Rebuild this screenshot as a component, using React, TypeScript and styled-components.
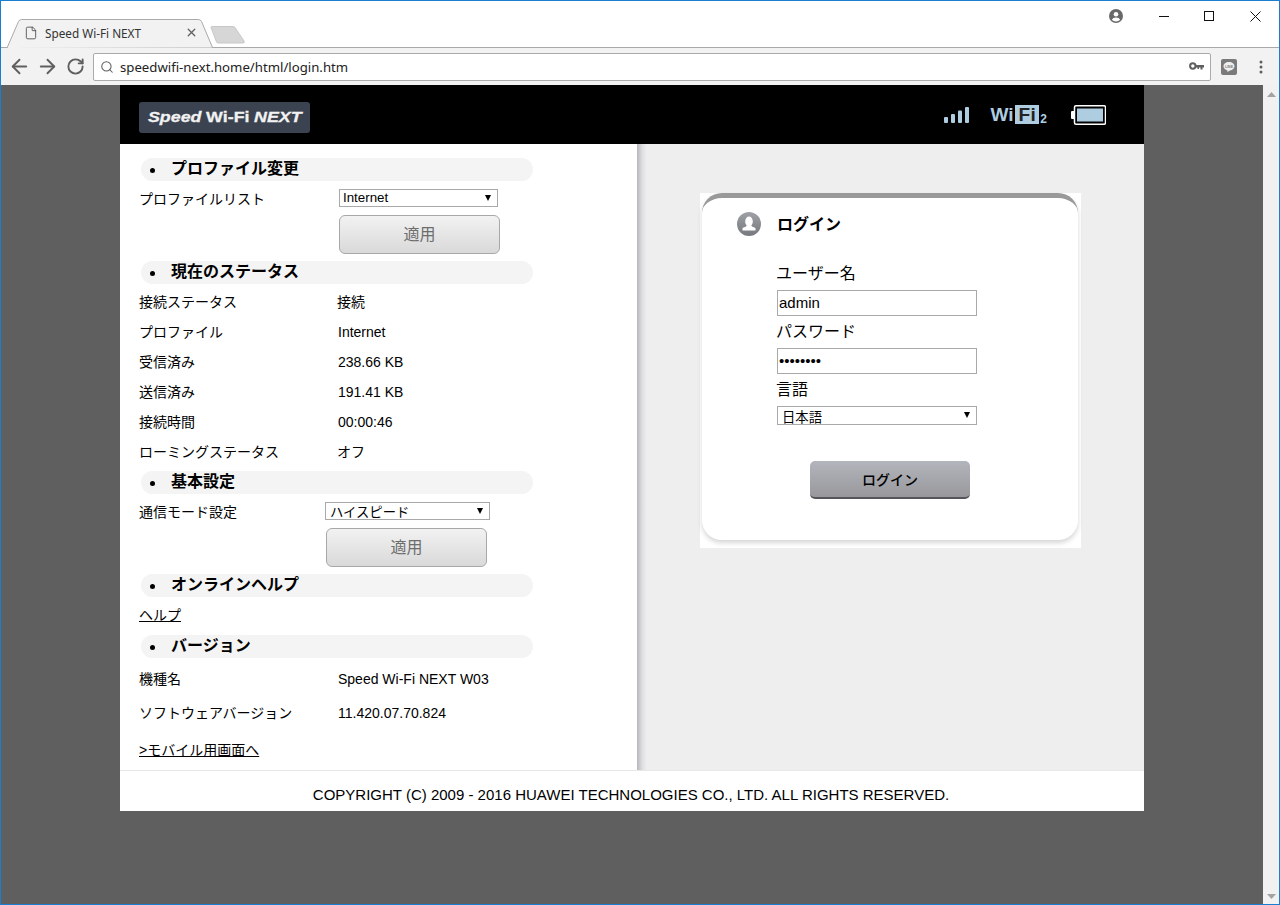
import React from "react";
import styled, { createGlobalStyle } from "styled-components";
import { ArrowLeft, ArrowRight, RotateCw, Search, File, X } from "lucide-react";

const Global = createGlobalStyle`
  html, body { margin: 0; padding: 0; height: 100%; overflow: hidden; }
  #root { height: 100%; }
  * { box-sizing: border-box; }
`;

const PAGE_FONT = `"Liberation Sans", "Noto Sans CJK JP", sans-serif`;
const UI_FONT = `"Noto Sans", "Open Sans", sans-serif`;

const Frame = styled.div`
  width: 1280px;
  height: 905px;
  display: flex;
  flex-direction: column;
  border: 1px solid #1a7ed2;
  background: #fff;
  font-family: ${PAGE_FONT};
  color: #000;
`;

const TabStrip = styled.div`
  height: 47px;
  flex: none;
  display: flex;
  align-items: flex-end;
  padding-left: 5px;
  position: relative;
  background: #fff;
  border-bottom: 1px solid #a9a9a9;
`;

const Tab = styled.div`
  position: relative;
  width: 207px;
  height: 29px;
  margin-bottom: -1px;
  display: flex;
  align-items: center;
  padding: 0 15px 2px 18px;
  gap: 7px;
  color: #444;
`;

const TabShape = styled.svg`
  position: absolute;
  left: 0;
  top: 0;
`;

const TabTitle = styled.span`
  position: relative;
  flex: 1;
  font: 11.75px ${UI_FONT};
  color: #333;
  white-space: nowrap;
`;

const NewTab = styled.svg`
  margin: 0 0 3px -3px;
`;

const WindowControls = styled.div`
  position: absolute;
  right: 0;
  top: 0;
  height: 30px;
  display: flex;
  align-items: center;
`;

const Control = styled.div<{ $w: number }>`
  width: ${(p) => p.$w}px;
  height: 30px;
  display: flex;
  align-items: center;
  justify-content: center;
`;

const Toolbar = styled.div`
  height: 37px;
  flex: none;
  display: flex;
  align-items: center;
  background: #f2f2f2;
  padding: 0 0 0 4px;
`;

const NavButton = styled.div`
  width: 28px;
  display: flex;
  justify-content: center;
  color: #5f5f5f;
`;

const Omnibox = styled.div`
  width: 1118px;
  height: 28px;
  margin-left: 4px;
  padding: 0 6px 0 6px;
  display: flex;
  align-items: center;
  gap: 6px;
  background: #fff;
  border: 1px solid #ababab;
  border-radius: 2px;
  color: #5f5f5f;
`;

const Url = styled.span`
  flex: 1;
  font: 13.2px ${UI_FONT};
  color: #222;
`;

const ExtSlot = styled.div`
  width: 36px;
  height: 16px;
  display: flex;
  align-items: center;
  justify-content: center;
`;

const MenuSlot = styled.div`
  width: 20px;
  margin-left: 4px;
  display: flex;
  justify-content: center;
`;

const Viewport = styled.div`
  flex: 1;
  display: flex;
  min-height: 0;
`;

const Stage = styled.div`
  flex: 1;
  background: #5f5f5f;
  padding-left: 119px;
`;

const Scrollbar = styled.div`
  width: 16px;
  background: #f1f1f1;
  display: flex;
  flex-direction: column;
  justify-content: space-between;
  align-items: center;
  padding: 7px 0 5px;
`;

const Page = styled.div`
  width: 1024px;
`;

const Header = styled.header`
  height: 59px;
  background: #000;
  display: flex;
  align-items: center;
  padding: 0 38px 0 19px;
`;

const Logo = styled.div`
  width: 171px;
  height: 31px;
  margin-top: 5px;
  border-radius: 3px;
  background: #3b4350;
  display: flex;
  align-items: center;
  justify-content: center;
`;

const LogoText = styled.div`
  color: #f2f2f2;
  font: bold 15.5px "Liberation Sans", sans-serif;
  display: flex;
  gap: 4px;
  white-space: nowrap;
  transform: scaleX(1.15);
  -webkit-text-stroke: 0.3px #f2f2f2;
`;

const LogoItalic = styled.i`
  font-style: italic;
  font-weight: bold;
`;

const Status = styled.div`
  margin-left: auto;
  display: flex;
  align-items: center;
`;

const WifiMark = styled.div`
  margin: 0 24px 0 21px;
  display: flex;
  align-items: flex-end;
  height: 19px;
  font: bold 19px/19px "Liberation Sans", sans-serif;
  color: #afcde0;
`;

const WifiBox = styled.span`
  background: #afcde0;
  color: #222;
  padding: 0 3px;
  margin-left: 2px;
  letter-spacing: 0.5px;
`;

const WifiSub = styled.span`
  font: bold 12px/11px "Liberation Sans", sans-serif;
  margin: 0 0 -1px 1px;
`;

const Columns = styled.div`
  display: flex;
  height: 626px;
`;

const LeftCol = styled.section`
  width: 517px;
  background: #fff;
  padding: 14px 0 0 20px;
  font-size: 14px;
`;

const RightCol = styled.section`
  flex: 1;
  padding: 49px 0 0 63px;
  background: linear-gradient(to right, #b4b4ba 0, #cfcfd3 3px, #e2e2e4 6px, #eee 10px);
`;

const Pill = styled.h2<{ $top: number }>`
  width: 392px;
  height: 23px;
  margin: ${(p) => p.$top}px 0 0 1px;
  padding-bottom: 2px;
  border-radius: 12px;
  background: #f4f4f4;
  display: flex;
  align-items: center;
  font-size: 16px;
  font-weight: bold;
  line-height: 23px;
`;

const Bullet = styled.span`
  width: 5px;
  height: 5px;
  margin: 3px 16px 0 9px;
  border-radius: 50%;
  background: #000;
`;

const Label = styled.span`
  margin-left: -1px;
  padding-bottom: 2px;
`;

const SelectLabel = styled.span`
  margin-left: -1px;
`;

const SelectRow = styled.div<{ $col: number }>`
  display: grid;
  grid-template-columns: ${(p) => p.$col}px auto;
  grid-template-rows: 18px;
  align-items: center;
  justify-content: start;
  height: 18px;
  margin-top: 8px;
`;

const SelectWrap = styled.div<{ $w: number; $h: number }>`
  position: relative;
  width: ${(p) => p.$w}px;
  height: ${(p) => p.$h}px;
`;

const NativeSelect = styled.select<{ $pt: number; $pl: number; $pb: number }>`
  appearance: none;
  display: block;
  width: 100%;
  height: 100%;
  border: 1px solid #a9a9a9;
  border-radius: 0;
  background: #fff;
  padding: ${(p) => p.$pt}px 0 ${(p) => p.$pb}px ${(p) => p.$pl}px;
  font: 13.33px/16px ${PAGE_FONT};
  color: #000;
  overflow: hidden;
`;

const SelectArrow = styled.svg`
  position: absolute;
  right: 7px;
  top: 6px;
  pointer-events: none;
`;

const ApplyButton = styled.button<{ $indent: number }>`
  display: block;
  width: 161px;
  height: 39px;
  margin: 8px 0 0 ${(p) => p.$indent}px;
  padding: 0 0 3px;
  border: 1px solid #a8a8a8;
  border-radius: 6px;
  background: linear-gradient(#f2f2f2, #d9d9d9);
  color: #6d6d6d;
  font: 16px ${PAGE_FONT};
`;

const InfoRow = styled.div<{ $h: number }>`
  display: grid;
  grid-template-columns: 198px 1fr;
  align-items: center;
  height: ${(p) => p.$h}px;
`;

const InfoList = styled.div<{ $top: number }>`
  margin-top: ${(p) => p.$top}px;
`;

const TextLink = styled.a<{ $top: number }>`
  display: block;
  width: max-content;
  margin: ${(p) => p.$top}px 0 0 -1px;
  height: 20px;
  line-height: 20px;
  color: #000;
  text-decoration: underline;
`;

const LoginPanel = styled.div`
  width: 381px;
  height: 355px;
  background: #fff;
  padding: 0 3px 0 2px;
`;

const LoginCard = styled.form`
  height: 347px;
  background: #fff;
  border-top: 5px solid #999;
  border-radius: 20px;
  box-shadow: 0 3px 5px rgba(0, 0, 0, 0.16);
  padding: 13px 0 0 35px;
`;

const LoginHead = styled.div`
  display: flex;
  align-items: center;
  height: 26px;
  gap: 16px;
  font-size: 16px;
  font-weight: bold;
`;

const LoginTitle = styled.span`
  padding-bottom: 2px;
`;

const FieldBlock = styled.div`
  margin-left: 40px;
  padding-top: 26px;
  width: 200px;
`;

const FieldLabel = styled.label`
  display: block;
  height: 21px;
  margin: 0 0 6px -1px;
  font-size: 16px;
  line-height: 21px;
`;

const TextInput = styled.input`
  display: block;
  width: 200px;
  height: 26px;
  margin-bottom: 5px;
  padding: 0 1px 1px;
  border: 1px solid #a9a9a9;
  border-radius: 0;
  outline: none;
  background: #fff;
  font: 15px ${PAGE_FONT};
  color: #000;
`;

const LoginButton = styled.button`
  display: block;
  width: 160px;
  height: 38px;
  margin: 36px 0 0 73px;
  border: 0;
  border-bottom: 2px solid #55555a;
  border-radius: 5px;
  background: linear-gradient(#b3b5bc, #98989c);
  color: #000;
  font: 500 14px ${PAGE_FONT};
`;

const Footer = styled.footer`
  height: 41px;
  background: #fff;
  border-top: 1px solid #e8e8e8;
  display: flex;
  align-items: center;
  justify-content: center;
  padding: 7px 2px 0 0;
  font-size: 15px;
`;

const Arrow = () => (
  <SelectArrow width="6" height="6" viewBox="0 0 6 6">
    <path d="M0 0h6L3 6z" fill="#000" />
  </SelectArrow>
);

const Chevron = ({ up }: { up?: boolean }) => (
  <svg width="9" height="5" viewBox="0 0 9 5">
    <path d={up ? "M4.5 0L9 5H0z" : "M0 0h9L4.5 5z"} fill="#a3a3a3" />
  </svg>
);

const Signal = () => (
  <svg width="25" height="16" viewBox="0 0 25 16" fill="#afcde0">
    <rect x="0" y="10" width="4" height="6" rx="1" />
    <rect x="7" y="7" width="4" height="9" rx="1" />
    <rect x="14" y="3.500" width="4" height="12.500" rx="1" />
    <rect x="21" y="0" width="4" height="16" rx="1" />
  </svg>
);

const Battery = () => (
  <svg width="35" height="20" viewBox="0 0 35 20">
    <rect x="0" y="6" width="4" height="8" rx="1" fill="#fff" />
    <rect x="3.500" y="0.750" width="31" height="18.500" rx="1.500" fill="#000" stroke="#fff" strokeWidth="1.500" />
    <rect x="6" y="3.500" width="26" height="13" fill="#afcde0" />
  </svg>
);

const Avatar = () => (
  <svg width="24" height="24" viewBox="0 0 24 24">
    <defs>
      <linearGradient id="avatarFill" x1="0" y1="0" x2="0" y2="1">
        <stop offset="0" stopColor="#9fa1a7" />
        <stop offset="1" stopColor="#75787d" />
      </linearGradient>
    </defs>
    <circle cx="12" cy="12" r="12" fill="url(#avatarFill)" />
    <ellipse cx="12" cy="9.500" rx="3.800" ry="5" fill="#fff" />
    <path d="M10 13h4l1 1.500 3.500 1.500v2.500h-13V16l3.500-1.500z" fill="#fff" />
  </svg>
);

export default function App() {
  return (
    <Frame>
      <Global />
      <TabStrip>
        <Tab>
          <TabShape width="207" height="29" viewBox="0 0 207 29">
            <path d="M1 29L12.500 2.500Q13.500 0.500 15.500 0.500H192.500Q194.500 0.500 195.500 2.500L206.500 28.500" fill="#f2f2f2" stroke="#a9a9a9" />
          </TabShape>
          <File size={14} strokeWidth={1.4} style={{ position: "relative" }} />
          <TabTitle>Speed Wi-Fi NEXT</TabTitle>
          <X size={13} strokeWidth={2.4} color="#5f5f5f" style={{ position: "relative" }} />
        </Tab>
        <NewTab width="35" height="18" viewBox="0 0 35 18">
          <path d="M1 1.500Q1 0.500 2 0.500H23Q24 0.500 25 1.500L34 15Q35 17 33 17H8Q7 17 6.500 16z" fill="#d6d6d6" stroke="#c8c8c8" />
        </NewTab>
        <WindowControls>
          <Control $w={50}>
            <svg width="14" height="14" viewBox="0 0 14 14">
              <circle cx="7" cy="7" r="7" fill="#696969" />
              <circle cx="7" cy="5.200" r="2.300" fill="#fff" />
              <path d="M2.800 10.800Q4 8.500 7 8.500T11.200 10.800Q9.500 12.600 7 12.600T2.800 10.800z" fill="#fff" />
            </svg>
          </Control>
          <Control $w={45}>
            <svg width="10" height="10" viewBox="0 0 10 10"><path d="M0 5.500h10" stroke="#111" /></svg>
          </Control>
          <Control $w={46}>
            <svg width="10" height="10" viewBox="0 0 10 10"><rect x="0.500" y="0.500" width="9" height="9" fill="none" stroke="#111" /></svg>
          </Control>
          <Control $w={47}>
            <svg width="11" height="11" viewBox="0 0 11 11"><path d="M0.500 0.500l10 10M10.500 0.500l-10 10" stroke="#111" /></svg>
          </Control>
        </WindowControls>
      </TabStrip>
      <Toolbar>
        <NavButton><ArrowLeft size={23} strokeWidth={2} /></NavButton>
        <NavButton><ArrowRight size={23} strokeWidth={2} /></NavButton>
        <NavButton><RotateCw size={19} strokeWidth={2.4} /></NavButton>
        <Omnibox>
          <Search size={14} strokeWidth={1.8} />
          <Url>speedwifi-next.home/html/login.htm</Url>
          <svg width="15" height="9" viewBox="0 0 15 9">
            <circle cx="3.800" cy="4" r="2.700" fill="none" stroke="#5f5f5f" strokeWidth="2" />
            <path d="M6 3h9v2.500h-1.500v2h-2v-2H10v1.500H8.500V5.500H6z" fill="#5f5f5f" />
          </svg>
        </Omnibox>
        <ExtSlot>
          <svg width="16" height="16" viewBox="0 0 16 16">
            <rect width="16" height="16" rx="2" fill="#7a7a7a" />
            <path d="M8 3C4.700 3 2.500 4.900 2.500 7.300 2.500 9.300 4.100 10.900 6.500 11.400L6.300 13 9 11.500C11.500 11 13.500 9.500 13.500 7.300 13.500 4.900 11.300 3 8 3z" fill="#efefef" />
            <text x="8" y="8.800" textAnchor="middle" fontSize="3.500" fontWeight="bold" fontFamily="Liberation Sans" fill="#7a7a7a">LINE</text>
          </svg>
        </ExtSlot>
        <MenuSlot>
          <svg width="4" height="14" viewBox="0 0 4 14" fill="#5f5f5f">
            <circle cx="2" cy="2" r="1.500" /><circle cx="2" cy="7" r="1.500" /><circle cx="2" cy="12" r="1.500" />
          </svg>
        </MenuSlot>
      </Toolbar>
      <Viewport>
        <Stage>
          <Page>
            <Header>
              <Logo>
                <LogoText>
                  <LogoItalic>Speed</LogoItalic>
                  <span>Wi-Fi</span>
                  <LogoItalic>NEXT</LogoItalic>
                </LogoText>
              </Logo>
              <Status>
                <Signal />
                <WifiMark>
                  <span>Wi</span>
                  <WifiBox>Fi</WifiBox>
                  <WifiSub>2</WifiSub>
                </WifiMark>
                <Battery />
              </Status>
            </Header>
            <Columns>
              <LeftCol>
                <Pill $top={0}><Bullet />プロファイル変更</Pill>
                <SelectRow $col={199}>
                  <SelectLabel>プロファイルリスト</SelectLabel>
                  <SelectWrap $w={159} $h={18}>
                    <NativeSelect $pt={0} $pl={3} $pb={1} defaultValue="Internet">
                      <option>Internet</option>
                    </NativeSelect>
                    <Arrow />
                  </SelectWrap>
                </SelectRow>
                <ApplyButton type="button" $indent={199}>適用</ApplyButton>

                <Pill $top={7}><Bullet />現在のステータス</Pill>
                <InfoList $top={3}>
                  <InfoRow $h={30}><Label>接続ステータス</Label><Label>接続</Label></InfoRow>
                  <InfoRow $h={30}><Label>プロファイル</Label><span>Internet</span></InfoRow>
                  <InfoRow $h={30}><Label>受信済み</Label><span>238.66 KB</span></InfoRow>
                  <InfoRow $h={30}><Label>送信済み</Label><span>191.41 KB</span></InfoRow>
                  <InfoRow $h={30}><Label>接続時間</Label><span>00:00:46</span></InfoRow>
                  <InfoRow $h={30}><Label>ローミングステータス</Label><Label>オフ</Label></InfoRow>
                </InfoList>

                <Pill $top={4}><Bullet />基本設定</Pill>
                <SelectRow $col={185}>
                  <SelectLabel>通信モード設定</SelectLabel>
                  <SelectWrap $w={165} $h={18}>
                    <NativeSelect $pt={2} $pl={4} $pb={0} defaultValue="ハイスピード">
                      <option>ハイスピード</option>
                    </NativeSelect>
                    <Arrow />
                  </SelectWrap>
                </SelectRow>
                <ApplyButton type="button" $indent={186}>適用</ApplyButton>

                <Pill $top={7}><Bullet />オンラインヘルプ</Pill>
                <TextLink $top={8} href="#">ヘルプ</TextLink>
                <Pill $top={10}><Bullet />バージョン</Pill>
                <InfoList $top={4}>
                  <InfoRow $h={34}><Label>機種名</Label><span>Speed Wi-Fi NEXT W03</span></InfoRow>
                  <InfoRow $h={34}><Label>ソフトウェアバージョン</Label><span>11.420.07.70.824</span></InfoRow>
                </InfoList>
                <TextLink $top={10} href="#">&gt;モバイル用画面へ</TextLink>
              </LeftCol>
              <RightCol>
                <LoginPanel>
                  <LoginCard>
                    <LoginHead><Avatar /><LoginTitle>ログイン</LoginTitle></LoginHead>
                    <FieldBlock>
                      <FieldLabel>ユーザー名</FieldLabel>
                      <TextInput type="text" defaultValue="admin" />
                      <FieldLabel>パスワード</FieldLabel>
                      <TextInput type="password" defaultValue="password" />
                      <FieldLabel>言語</FieldLabel>
                      <SelectWrap $w={200} $h={19}>
                        <NativeSelect $pt={3} $pl={4} $pb={0} defaultValue="日本語">
                          <option>日本語</option>
                        </NativeSelect>
                        <Arrow />
                      </SelectWrap>
                    </FieldBlock>
                    <LoginButton type="button">ログイン</LoginButton>
                  </LoginCard>
                </LoginPanel>
              </RightCol>
            </Columns>
            <Footer>COPYRIGHT (C) 2009 - 2016 HUAWEI TECHNOLOGIES CO., LTD. ALL RIGHTS RESERVED.</Footer>
          </Page>
        </Stage>
        <Scrollbar>
          <Chevron up />
          <Chevron />
        </Scrollbar>
      </Viewport>
    </Frame>
  );
}
